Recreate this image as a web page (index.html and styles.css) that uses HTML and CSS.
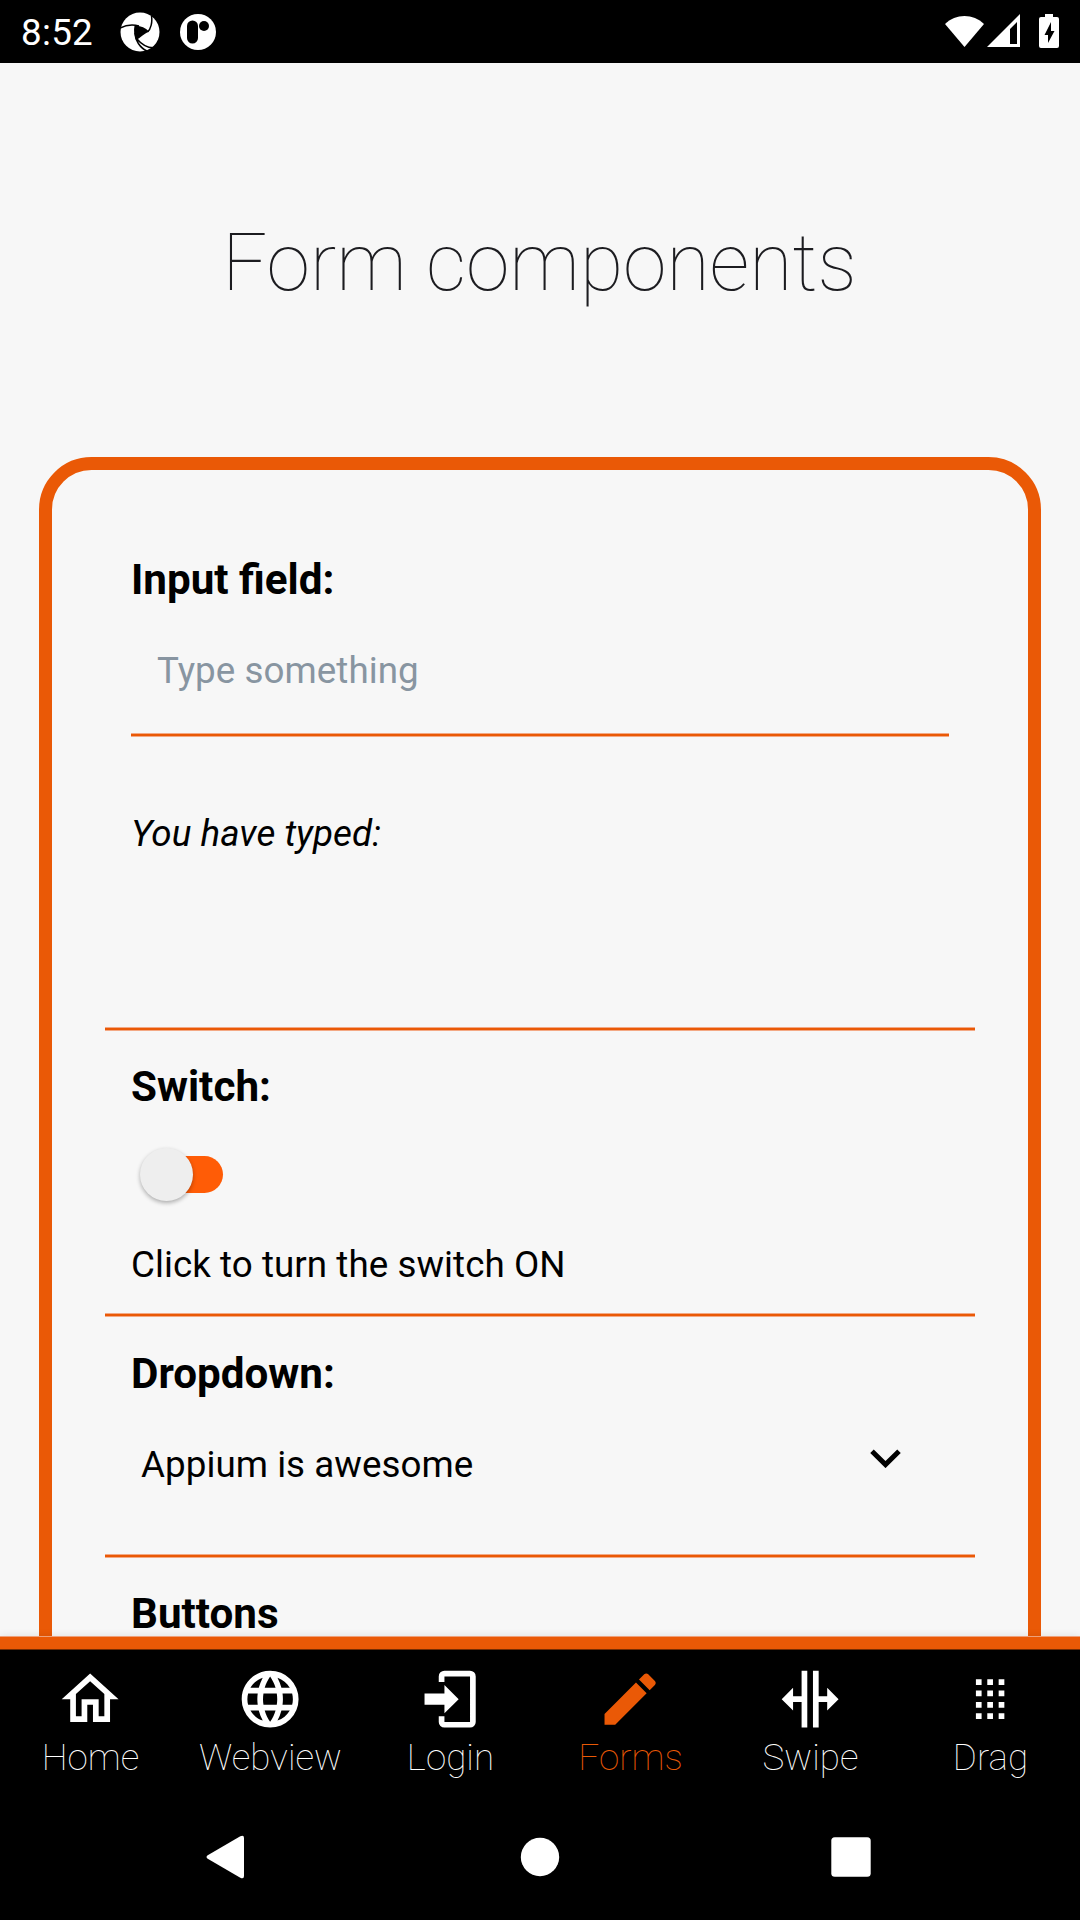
FILE: index.html
```html
<!DOCTYPE html>
<html lang="en">
<head>
<meta charset="utf-8">
<title>Form components</title>
<link rel="stylesheet" href="styles.css">
</head>
<body>
<header class="status">
  <span class="clock">8:52</span>
  <svg class="status-appium" viewBox="0 0 40 40">
    <circle cx="20" cy="20" r="19.5" fill="#fff"/>
    <path fill="#000" d="M14.500 13.800C19 13 25 15 29 19.500C25 21.500 20 25.500 16.500 28C14 24 13.500 18 14.500 13.800Z"/>
    <path class="blade" d="M0 16C5 13.500 13 12.500 19 14M15 21C15 28 20 36 27 39M27.500 20C31 17 32.500 10 31.500 4M17 27C22 33 29 36.500 36 35.500"/>
  </svg>
  <svg class="status-r" viewBox="0 0 36 36">
    <circle cx="18" cy="18" r="18" fill="#fff"/>
    <rect x="7" y="6.500" width="11" height="23" rx="5.500"/>
    <circle cx="24" cy="12" r="5"/>
  </svg>
  <svg class="status-right" viewBox="0 0 120 40" fill="#fff">
    <path d="M0 12C10.500 1.300 28.500 1.300 39 12L19.500 35Z"/>
    <path fill-rule="evenodd" d="M42 35L75 2V35ZM65 17V32H72V10Z"/>
    <path fill-rule="evenodd" d="M100 2H108V5H112Q114 5 114 7V34Q114 36 112 36H96Q94 36 94 34V7Q94 5 96 5H100ZM106 10L99.500 23H103V31L109.500 19H106Z"/>
  </svg>
</header>
<main class="screen">
  <h1 class="title">Form components</h1>
  <section class="card">
    <div class="group group-input">
      <h2 class="label">Input field:</h2>
      <div class="field">Type something</div>
      <p class="text typed">You have typed:</p>
    </div>
    <div class="group group-switch">
      <h2 class="label">Switch:</h2>
      <div class="switch"><span class="track"></span><span class="thumb"></span></div>
      <p class="text">Click to turn the switch ON</p>
    </div>
    <div class="group group-dropdown">
      <h2 class="label">Dropdown:</h2>
      <div class="select">
        <span>Appium is awesome</span>
        <svg class="chevron" viewBox="0 0 31 19"><path d="M2 2.200L15.500 15.600L29 2.200"/></svg>
      </div>
    </div>
    <div class="group group-buttons"><h2 class="label">Buttons</h2></div>
  </section>
</main>
<nav class="tabs">
  <div class="tab"><svg class="icon" viewBox="0 0 24 24"><path d="M12 5.690l5 4.500V18h-2v-6H9v6H7v-7.810l5-4.500M12 3L2 12h3v8h6v-6h2v6h6v-8h3L12 3z"/></svg><span>Home</span></div>
  <div class="tab"><svg class="icon" viewBox="0 0 24 24"><path d="M16.360 14C16.440 13.340 16.500 12.680 16.500 12C16.500 11.320 16.440 10.660 16.360 10H19.740C19.900 10.640 20 11.310 20 12C20 12.690 19.900 13.360 19.740 14M14.590 19.560C15.190 18.450 15.650 17.250 15.970 16H18.920C17.960 17.650 16.430 18.930 14.590 19.560M14.340 14H9.660C9.560 13.340 9.500 12.680 9.500 12C9.500 11.320 9.560 10.650 9.660 10H14.340C14.430 10.650 14.500 11.320 14.500 12C14.500 12.680 14.430 13.340 14.340 14M12 19.960C11.170 18.760 10.500 17.430 10.090 16H13.910C13.500 17.430 12.830 18.760 12 19.960M8 8H5.080C6.030 6.340 7.570 5.060 9.400 4.440C8.800 5.550 8.350 6.750 8 8M5.080 16H8C8.350 17.250 8.800 18.450 9.400 19.560C7.570 18.930 6.030 17.650 5.080 16M4.260 14C4.100 13.360 4 12.690 4 12C4 11.310 4.100 10.640 4.260 10H7.640C7.560 10.660 7.500 11.320 7.500 12C7.500 12.680 7.560 13.340 7.640 14M12 4.030C12.830 5.230 13.500 6.570 13.910 8H10.090C10.500 6.570 11.170 5.230 12 4.030M18.920 8H15.970C15.650 6.750 15.190 5.550 14.590 4.440C16.430 5.070 17.960 6.340 18.920 8M12 2C6.470 2 2 6.500 2 12A10 10 0 0 0 12 22A10 10 0 0 0 22 12A10 10 0 0 0 12 2Z"/></svg><span>Webview</span></div>
  <div class="tab"><svg class="icon" viewBox="0 0 24 24"><path d="M10 17V14H3V10H10V7L15 12L10 17M10 2H19A2 2 0 0 1 21 4V20A2 2 0 0 1 19 22H10A2 2 0 0 1 8 20V18H10V20H19V4H10V6H8V4A2 2 0 0 1 10 2Z"/></svg><span>Login</span></div>
  <div class="tab active"><svg class="icon" viewBox="0 0 24 24"><path d="M20.710 7.040C21.100 6.650 21.100 6 20.710 5.630L18.370 3.290C18 2.900 17.350 2.900 16.960 3.290L15.120 5.120L18.870 8.870M3 17.250V21H6.750L17.810 9.930L14.060 6.180L3 17.250Z"/></svg><span>Forms</span></div>
  <div class="tab"><svg class="icon" viewBox="0 0 24 24"><path d="M18 16V13H15V22H13V2H15V11H18V8L22 12L18 16M2 12L6 16V13H9V22H11V2H9V11H6V8L2 12Z"/></svg><span>Swipe</span></div>
  <div class="tab"><svg class="icon" viewBox="0 0 24 24"><path d="M7 5h2v2H7zM11 5h2v2h-2zM15 5h2v2h-2zM7 9h2v2H7zM11 9h2v2h-2zM15 9h2v2h-2zM7 13h2v2H7zM11 13h2v2h-2zM15 13h2v2h-2zM7 17h2v2H7zM11 17h2v2h-2zM15 17h2v2h-2z"/></svg><span>Drag</span></div>
</nav>
<footer class="system">
  <svg viewBox="0 0 1080 120" fill="#fff">
    <path d="M207.300 55.400L240.300 36.300Q244 34.500 244 38V76Q244 79.500 240.300 77.700L207.300 58.600Q205.500 57 207.300 55.400Z"/>
    <circle cx="540" cy="57" r="19.200"/>
    <rect x="831.300" y="37.200" width="39.400" height="39.500" rx="3.500"/>
  </svg>
</footer>
</body>
</html>
```
FILE: styles.css
```css
* { box-sizing: border-box; margin: 0; padding: 0; }
body {
  width: 1080px;
  height: 1920px;
  display: flex;
  flex-direction: column;
  overflow: hidden;
  background: #f7f7f7;
  color: #000;
  font-family: Roboto, sans-serif;
  font-size: 36.75px;
  letter-spacing: .05px;
}
svg { display: block; }

.status {
  height: 63px;
  flex: none;
  display: flex;
  align-items: flex-start;
  background: #000;
  color: #fff;
}
.clock { width: 99px; margin-left: 21px; line-height: 44px; padding-top: 11px; letter-spacing: .3px; }
.status-appium { width: 40px; height: 40px; margin-top: 12px; }
.status-r { width: 36px; height: 36px; margin: 14px 0 0 20px; }
.status-right { width: 120px; height: 40px; margin: 12px 15px 0 auto; }
.blade { fill: none; stroke: #000; stroke-width: 1.5; }

.screen { flex: 1; min-height: 0; overflow: hidden; }
.title {
  padding: 154px 1px 0 0;
  height: 394px;
  line-height: 92px;
  font-size: 78.75px;
  font-weight: 100;
  letter-spacing: .05px;
  text-align: center;
  color: #1c1c20;
}
.card {
  height: 1500px;
  margin: 0 39px;
  padding: 53px;
  border: 13px solid #ea5906;
  border-radius: 52.5px;
}
.label { font-size: 42.2px; line-height: 50px; font-weight: 700; letter-spacing: normal; }
.group { padding: 0 26px; }
.group + .group { padding-top: 31px; }
.group-input, .group-switch, .group-dropdown, .field {
  background: linear-gradient(#f3a985 1px, #ea5906 1px, #ea5906 3px, #f3a985 3px) bottom / 100% 4px no-repeat;
}
.group.group-input { height: 508px; padding-top: 32px; }
.group-switch { height: 286px; }
.group.group-dropdown { height: 241px; padding-top: 32px; }
.field {
  height: 132px;
  padding: 44px 26px 0;
  line-height: 44px;
  color: #8895a1;
}
.text { line-height: 44px; }
.typed { margin-top: 75px; font-style: italic; }
.switch {
  display: flex;
  align-items: center;
  width: 84px;
  height: 53px;
  margin: 36px 0 42px 9px;
}
.track { flex: none; width: 66px; height: 37px; margin-left: 17px; border-radius: 19px; background: #ff5c06; }
.thumb {
  flex: none;
  width: 53px;
  height: 53px;
  margin-left: -83px;
  border-radius: 50%;
  background: #eee;
  box-shadow: 0 2px 4px rgba(0, 0, 0, .3);
}
.select {
  display: flex;
  justify-content: space-between;
  padding: 44px 48px 0 10px;
  line-height: 44px;
}
.chevron { width: 31px; height: 19px; margin-top: 6px; }
.chevron path { fill: none; stroke: #000; stroke-width: 5; }

.tabs {
  flex: none;
  height: 164px;
  display: flex;
  padding-top: 14px;
  background: linear-gradient(#eea07a 1px, #ea5906 1px, #ea5906 13px, #752d03 13px, #752d03 14px, #000 14px);
  color: #fff;
  font-weight: 100;
  box-shadow: 0 0 8px rgba(0, 0, 0, .1);
}
.tab { width: 180px; display: flex; flex-direction: column; align-items: center; padding-top: 15px; }
.tab span { line-height: 44px; margin-top: 3px; padding-left: 1px; }
.icon { width: 68.25px; height: 68.25px; fill: currentColor; }
.active { color: #ea5906; }
.system { flex: none; height: 120px; background: #000; }
```
